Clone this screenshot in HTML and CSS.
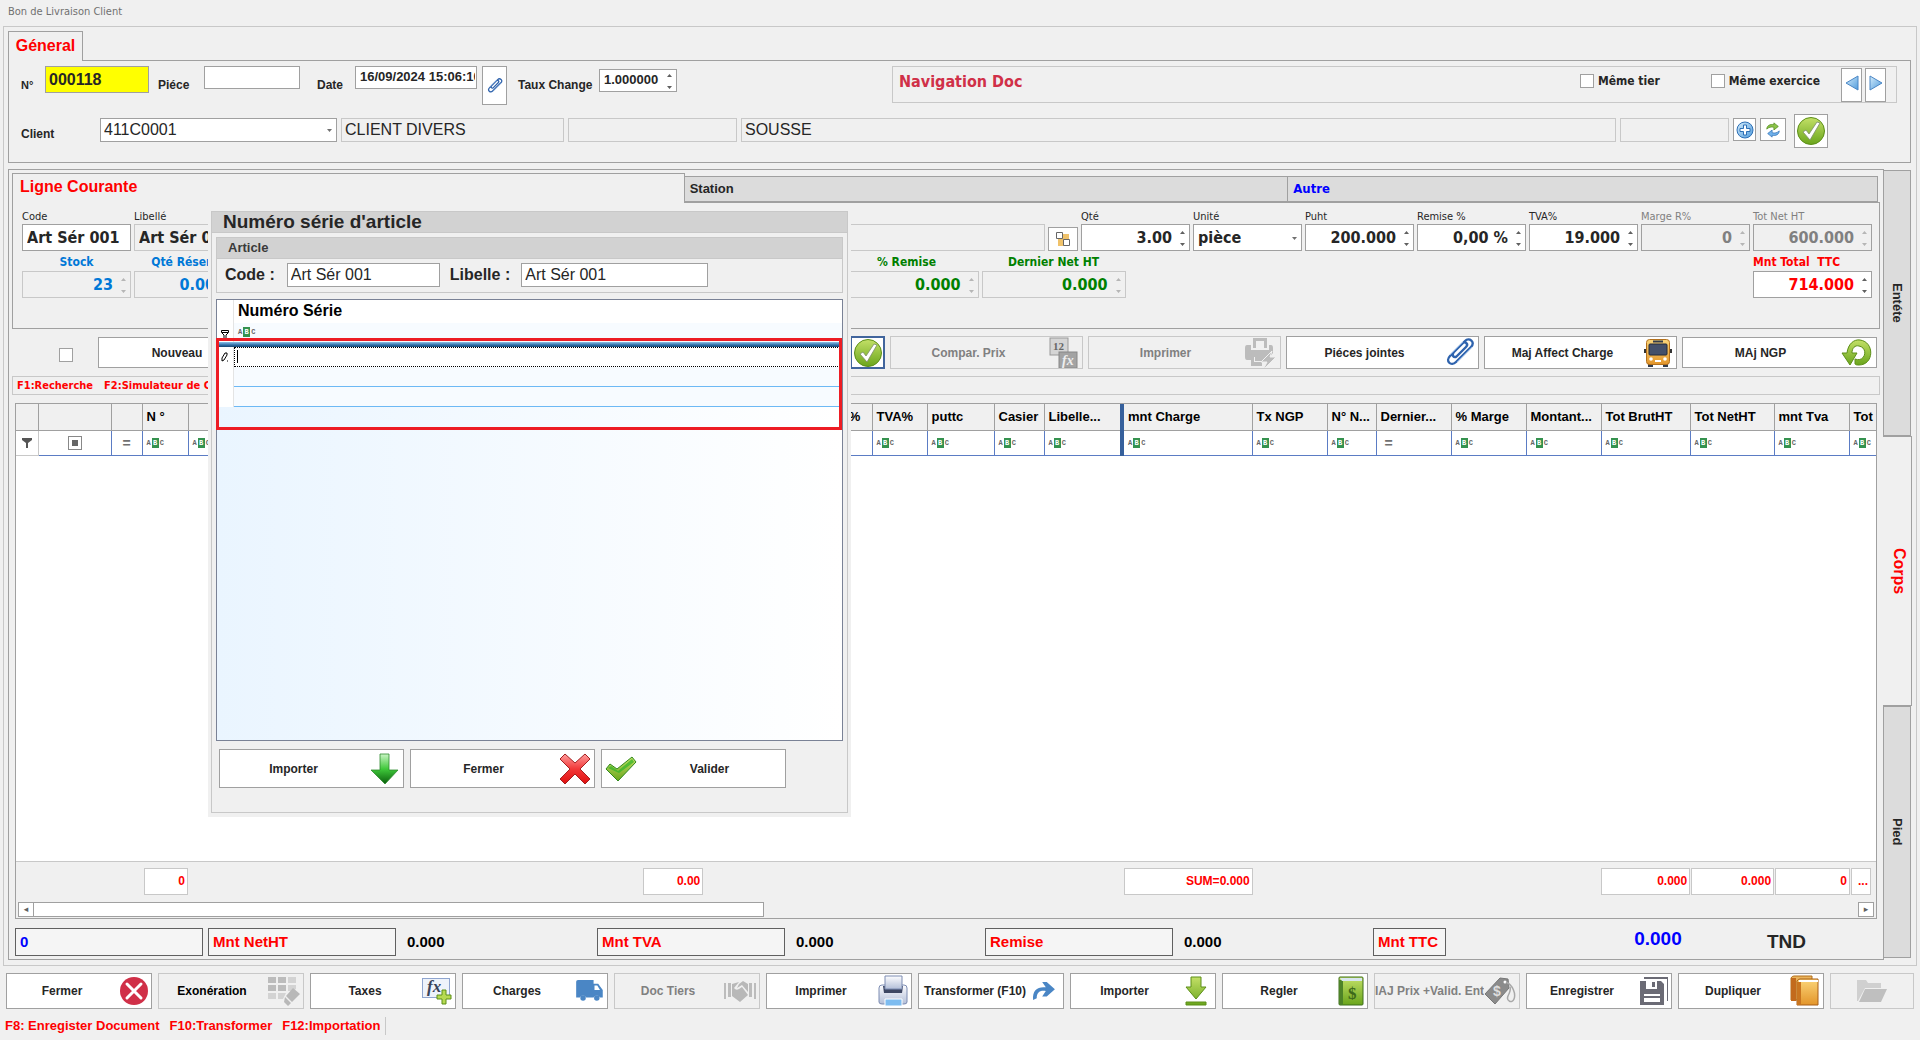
FILE: index.html
```html
<!DOCTYPE html>
<html lang="fr">
<head>
<meta charset="utf-8">
<title>Bon de Livraison Client</title>
<link rel="stylesheet" href="styles.css">
</head>
<body>
<svg class="defs" aria-hidden="true">
  <defs>
    <linearGradient id="gGreen" x1="0" y1="0" x2="0" y2="1"><stop offset="0" stop-color="#c3e067"/><stop offset="1" stop-color="#6aa51c"/></linearGradient>
    <linearGradient id="gBlue" x1="0" y1="0" x2="1" y2="1"><stop offset="0" stop-color="#d4ecfb"/><stop offset="1" stop-color="#4f9bdc"/></linearGradient>
    <linearGradient id="gArrow" x1="0" y1="0" x2="0" y2="1"><stop offset="0" stop-color="#c9f5c4"/><stop offset=".5" stop-color="#3fc83a"/><stop offset="1" stop-color="#0a5f0c"/></linearGradient>
    <linearGradient id="gRed" x1="0" y1="0" x2="0" y2="1"><stop offset="0" stop-color="#ff9d9d"/><stop offset=".5" stop-color="#f23838"/><stop offset="1" stop-color="#e01010"/></linearGradient>
    <linearGradient id="gOrange" x1="0" y1="0" x2="0" y2="1"><stop offset="0" stop-color="#fbd579"/><stop offset="1" stop-color="#e3952a"/></linearGradient>
    <linearGradient id="gSteel" x1="0" y1="0" x2="0" y2="1"><stop offset="0" stop-color="#fdfdff"/><stop offset="1" stop-color="#b3bfd8"/></linearGradient>
  </defs>
  <symbol id="clip" viewBox="0 0 30 30"><path d="M11 19 21 9c3-3-1-6-3-4L5 18c-5 5 1 11 6 6L26 9c5-5-2-10-6-6L9 14c-3 3 0 7 3 4l8-8" fill="none" stroke="#2f63ad" stroke-width="2.4" stroke-linecap="round"/><path d="M5 17 18 4M12 24 27 9" stroke="#8fb8e8" stroke-width=".8"/></symbol>
  <symbol id="prev" viewBox="0 0 14 16"><path d="M13 1v14L1 8z" fill="url(#gBlue)" stroke="#4a86c5"/></symbol>
  <symbol id="next" viewBox="0 0 14 16"><path d="M1 1v14l12-7z" fill="url(#gBlue)" stroke="#4a86c5"/></symbol>
  <symbol id="plus" viewBox="0 0 18 18"><circle cx="9" cy="9" r="8" fill="url(#gBlue)" stroke="#2d6fb5"/><path d="M7.5 4h3v3.500h3.500v3h-3.500v3.500h-3v-3.500H4v-3h3.500z" fill="#fff" stroke="#2d6fb5"/></symbol>
  <symbol id="sync" viewBox="0 0 18 18"><path d="M2 8c0-4 4-6 8-5V1l5 4-5 4V6C7 5 4 6 2 8z" fill="#8cc34a" stroke="#4d8a14" stroke-width=".8"/><path d="M16 10c0 4-4 6-8 5v2l-5-4 5-4v3c3 1 6 0 8-2z" fill="#6fb0ea" stroke="#2d6fb5" stroke-width=".8"/></symbol>
  <symbol id="ok" viewBox="0 0 30 30"><circle cx="15" cy="15" r="13.500" fill="url(#gGreen)" stroke="#5c8f18"/><path d="M7 16l3-2 3 4 8-12 3 1-10 17z" fill="#fff" stroke="#7b8d6a" stroke-width=".8"/></symbol>
  <symbol id="tiles" viewBox="0 0 16 16"><path d="M3 7h6v8H3zM7 3h7v6H7z" fill="#f0c26a"/><path d="M1.500 1.500h6v6h-6zM8.500 8.500h6v6h-6z" fill="#fff" stroke="#666"/></symbol>
  <symbol id="printfast" viewBox="0 0 32 32"><path d="M8 1h14v10h-3V4h-8v7H8z" fill="#bcbcbc"/><path d="M2 8h4v5h18V8h2q2 0 2 3v5l-7 8H10v-4H9v8H6v-5H2q-2 0-2-3v-9q0-3 2-3zM9 25h8v4H6v-2h3z" fill="#bcbcbc"/><path d="M27 14 16 25h6l-4 8 13-13h-6z" fill="#bcbcbc" stroke="#f0f0f0"/></symbol>
  <symbol id="bus" viewBox="0 0 30 30"><path d="M5 26h5v3H5zM20 26h5v3h-5z" fill="#333c4a"/><path d="M1 11h3v4H1zM26 11h3v4h-3z" fill="#333"/><rect x="3.500" y="1.500" width="23" height="25" rx="3" fill="url(#gOrange)" stroke="#b3701c"/><rect x="10" y="2.500" width="10" height="2" fill="#333c4a"/><rect x="6" y="6" width="18" height="11" rx="1" fill="#44506a" stroke="#222b3c"/><circle cx="8" cy="21" r="1.800" fill="#fff"/><circle cx="22" cy="21" r="1.800" fill="#fff"/><rect x="12" y="22" width="6" height="2" fill="#fff"/></symbol>
  <symbol id="reload" viewBox="0 0 32 30"><path d="M1 15h5C7 6 13 1 19 2c15 2 14 25-1 25-2 0-3 0-4-1v-5c10 4 14-11 4-13-4-1-7 2-7 7h5L9 27z" fill="url(#gGreen)" stroke="#5c8f18"/></symbol>
  <symbol id="down" viewBox="0 0 30 32"><path d="M10 1h9v16h9L15 31 1 17h9z" fill="url(#gArrow)" stroke="#2f8a2f" stroke-width=".8"/></symbol>
  <symbol id="cross" viewBox="0 0 32 32"><path d="M6 1 16 10 26 1l5 5-10 10 10 10-5 5-10-10L6 31l-5-5 10-10L1 6z" fill="url(#gRed)" stroke="#a32020" stroke-linejoin="round"/></symbol>
  <symbol id="tick" viewBox="0 0 32 26"><path d="M1 13 5 8l7 5L27 1l4 5L13 25z" fill="url(#gGreen)" stroke="#2f8a1c" stroke-linejoin="round"/><path d="M3 12l3-2 7 5L27 3l2 3-15 11z" fill="#35b52a" opacity=".75"/></symbol>
  <symbol id="close" viewBox="0 0 28 28"><circle cx="14" cy="14" r="14" fill="#d03048"/><path d="M7 7l14 14M21 7 7 21" stroke="#fff" stroke-width="3" stroke-linecap="round"/></symbol>
  <symbol id="griderase" viewBox="0 0 32 30"><path d="M0 1h8v6H0zM10 1h8v6h-8zM0 9h8v6H0zM10 9h8v6h-8z" fill="#bcbcbc"/><path d="M20 1h8v6h-8zM20 9h8v4l-4 2h-4zM0 17h8v6H0zM10 17h8l-3 6h-5z" fill="#d3d3d3"/><path d="M25 12l7 6-8 8-6-6zM17 21l6 6-3 3-4-4z" fill="#b8b8b8"/></symbol>
  <symbol id="truck" viewBox="0 0 30 24"><path d="M1 2q0-2 2-2h17v4h5l5 7v8h-3a4 4 0 0 0-7 0H12a4 4 0 0 0-7 0H1zM21 6v5h6l-3-5z" fill="#4a86c5" fill-rule="evenodd"/><circle cx="8.500" cy="19.500" r="3" fill="#4a86c5"/><circle cx="23.500" cy="19.500" r="3" fill="#4a86c5"/></symbol>
  <symbol id="hands" viewBox="0 0 32 24"><path d="M0 4h2v16H0zM4 4h3v14H4zM25 4h3v14h-3zM30 4h2v16h-2z" fill="#bcbcbc"/><path d="M8 5l7-2-5 6q2 3 5 1l3-2 6 8-8 7-8-6zM15 5l4-3 5 3v8l-6-7-5 3z" fill="#b8b8b8"/></symbol>
  <symbol id="printer" viewBox="0 0 30 32"><path d="M1 13q0-3 3-3h22q3 0 3 3v14q0 2-3 2H4q-3 0-3-2z" fill="url(#gSteel)" stroke="#7c8cb2"/><path d="M5 11h20l-1 7H6z" fill="#3d4763"/><path d="M7 1h17v13H7z" fill="url(#gSteel)" stroke="#7c8cb2"/><path d="M7 24h17v7H7z" fill="#7dbcf0" stroke="#fff"/></symbol>
  <symbol id="redo" viewBox="0 0 24 22"><path d="M0 21C-1 10 5 6 14 7L10 1h5l9 8-9 8h-5l4-6c-7-1-10 2-10 8z" fill="#4a86c5"/></symbol>
  <symbol id="import" viewBox="0 0 22 30"><path d="M6 1h10v10h5L11 23 1 11h5zM1 26h20v3H1z" fill="url(#gGreen)" stroke="#5c8f18"/></symbol>
  <symbol id="floppy" viewBox="0 0 28 30"><path d="M4 1h24v24h-1V3H4z" fill="#6b6b75"/><path d="M0 5h21l3 3v21H0zM6 5v8h11V5zM4 18v8h16v-8z" fill="#6b6b75" fill-rule="evenodd"/><path d="M12 6h3v5h-3zM4 20h16v2H4z" fill="#6b6b75"/></symbol>
  <symbol id="books" viewBox="0 0 30 32"><path d="M1 3q1-2 3-2h18v24H1z" fill="#e9b35b" stroke="#b3701c"/><path d="M1 3h5v23H1z" fill="#c26a1c"/><path d="M7 6q1-2 3-2h18v26H7z" fill="url(#gOrange)" stroke="#a85f18"/><path d="M7 7h4v23H7z" fill="#c9751f"/><path d="M9 5h19v2H9z" fill="#fff"/></symbol>
  <symbol id="folder" viewBox="0 0 30 24"><path d="M0 1h9l2 3h13v5H8L1 22H0z" fill="#d0d0d0"/><path d="M8 10h22l-6 13H2z" fill="#bfbfbf"/></symbol>
  <symbol id="funnel" viewBox="0 0 10 10"><path d="M0 0h10v2L6 5v5H4V5L0 2z" fill="#555"/></symbol>
  <symbol id="funnelx" viewBox="0 0 8 9"><path d="M.5.5h7v2L5 5v3.500H3V5L.5 2.500zM1 2.500h6" fill="#fff" stroke="#000"/></symbol>
  <symbol id="pencil" viewBox="0 0 8 10"><path d="M1 9V6l3-5h2v2L3 8zM6 9h1" fill="none" stroke="#000"/></symbol>
</svg>

<div class="app">
  <div class="caption">Bon de Livraison Client</div>
  <main class="frame">
    <div class="gen-tabs"><button class="gen-tab">Géneral</button></div>
    <section class="general">
      <div class="row-one">
        <label class="tag tiny" for="num">N°</label>
        <input id="num" class="box num" value="000118">
        <label class="tag in9" for="piece">Piéce</label>
        <input id="piece" class="box small" value="">
        <label class="tag in17" for="date">Date</label>
        <input id="date" class="box small" value="16/09/2024 15:06:10">
        <button class="btn clipbtn" aria-label="Joindre"><svg width="16" height="18"><use href="#clip"/></svg></button>
        <label class="tag in11" for="taux">Taux Change</label>
        <span class="spin low"><input id="taux" class="box small" value="1.000000"></span>
        <div class="nav">
          <span class="nav-title">Navigation Doc</span>
          <label class="check"><input type="checkbox">Même tier</label>
          <label class="check second"><input type="checkbox">Même exercice</label>
          <button class="btn navbtn" aria-label="Précédent"><svg width="14" height="16"><use href="#prev"/></svg></button>
          <button class="btn navbtn" aria-label="Suivant"><svg width="14" height="16"><use href="#next"/></svg></button>
        </div>
      </div>
      <div class="row-two">
        <label class="tag client" for="client">Client</label>
        <span class="combo"><input id="client" class="box light" value="411C0001"></span>
        <input class="box light off" aria-label="Nom" value="CLIENT DIVERS" readonly>
        <input class="box light off" aria-label="Matricule" readonly>
        <input class="box light off" aria-label="Adresse" value="SOUSSE" readonly>
        <input class="box light off" aria-label="Téléphone" readonly>
        <button class="btn mini" aria-label="Ajouter"><svg width="18" height="18"><use href="#plus"/></svg></button>
        <button class="btn mini" aria-label="Actualiser"><svg width="16" height="16"><use href="#sync"/></svg></button>
        <button class="btn okbtn" aria-label="Valider client"><svg width="30" height="30"><use href="#ok"/></svg></button>
      </div>
    </section>

    <div class="pages">
      <section class="corps">
        <div class="line-tabs">
          <button class="line-tab current">Ligne Courante</button>
          <button class="line-tab">Station</button>
          <button class="line-tab autre">Autre</button>
        </div>
        <div class="line">
          <div class="line-row">
            <label class="fld w109">Code<input class="box fig left" value="Art Sér 001"></label>
            <label class="fld grow">Libellé<input class="box fig left off" value="Art Sér 001" readonly></label>
            <button class="btn tilebtn" aria-label="Variantes"><svg width="16" height="16"><use href="#tiles"/></svg></button>
            <label class="fld w109">Qté<span class="spin"><input class="box fig" value="3.00"></span></label>
            <label class="fld w109">Unité<span class="combo"><input class="box fig left" value="pièce"></span></label>
            <label class="fld w109">Puht<span class="spin"><input class="box fig" value="200.000"></span></label>
            <label class="fld w109">Remise %<span class="spin"><input class="box fig" value="0,00 %"></span></label>
            <label class="fld w109">TVA%<span class="spin"><input class="box fig" value="19.000"></span></label>
            <label class="fld w109 dim">Marge R%<span class="spin faint"><input class="box fig" value="0" disabled></span></label>
            <label class="fld w119 dim">Tot Net HT<span class="spin faint"><input class="box fig" value="600.000" disabled></span></label>
          </div>
          <div class="line-row sub">
            <label class="stat w109 blue">Stock<span class="spin faint"><input class="box fig off" value="23" readonly></span></label>
            <label class="stat w109 blue">Qté Réservé<span class="spin faint"><input class="box fig off" value="0.000" readonly></span></label>
            <span class="gap-a"></span>
            <label class="stat w144 green">% Remise<span class="spin faint"><input class="box fig off" value="0.000" readonly></span></label>
            <label class="stat w144 green">Dernier Net HT<span class="spin faint"><input class="box fig off" value="0.000" readonly></span></label>
            <span class="gap-b"></span>
            <label class="stat w119 red">Mnt Total&nbsp; TTC<span class="spin"><input class="box fig" value="714.000"></span></label>
          </div>
        </div>

        <div class="actions">
          <input type="checkbox" class="pick" aria-label="Sélection">
          <button class="btn act nouveau"><span>Nouveau</span></button>
          <button class="btn act okline" aria-label="Valider ligne"><svg width="30" height="30"><use href="#ok"/></svg></button>
          <button class="btn act" disabled><span>Compar. Prix</span><svg width="30" height="32" viewBox="0 0 30 32"><rect x="1" y="1" width="18" height="17" fill="#d5d5d5" stroke="#999"/><text x="4" y="13" font-family="Liberation Serif" font-weight="bold" font-size="11" fill="#666">12</text><rect x="10" y="15" width="18" height="16" fill="#a3a3a3" stroke="#888"/><text x="13" y="28" font-family="Liberation Serif" font-style="italic" font-weight="bold" font-size="14" fill="#eee">fx</text></svg></button>
          <button class="btn act" disabled><span>Imprimer</span><svg width="32" height="32"><use href="#printfast"/></svg></button>
          <button class="btn act"><span>Piéces jointes</span><svg width="30" height="30"><use href="#clip"/></svg></button>
          <button class="btn act"><span>Maj Affect Charge</span><svg width="30" height="30"><use href="#bus"/></svg></button>
          <button class="btn act last"><span>MAj NGP</span><svg width="32" height="30"><use href="#reload"/></svg></button>
        </div>
        <div class="keys"><span>F1:Recherche</span><span>F2:Simulateur de Calcul</span></div>

        <div class="grid">
          <table class="lines">
            <colgroup><col style="width:22px"><col style="width:73px"><col style="width:31px"><col style="width:46px"><col style="width:610px"><col style="width:74px"><col style="width:55px"><col style="width:67px"><col style="width:50px"><col style="width:78px"><col style="width:130px"><col style="width:75px"><col style="width:49px"><col style="width:75px"><col style="width:75px"><col style="width:75px"><col style="width:89px"><col style="width:84px"><col style="width:75px"><col style="width:27px"></colgroup>
            <thead><tr><th></th><th></th><th></th><th>N °</th><th></th><th>Remise%</th><th>TVA%</th><th>puttc</th><th>Casier</th><th class="split">Libelle...</th><th>mnt Charge</th><th>Tx NGP</th><th>N° N...</th><th>Dernier...</th><th>% Marge</th><th>Montant...</th><th>Tot BrutHT</th><th>Tot NetHT</th><th>mnt Tva</th><th>Tot</th></tr></thead>
            <tbody><tr><td class="plain"><svg width="10" height="10"><use href="#funnel"/></svg></td><td class="mid"><i class="tri"></i></td><td class="mid">=</td><td><span class="abc">A<b>B</b>C</span></td><td><span class="abc">A<b>B</b>C</span></td><td></td><td><span class="abc">A<b>B</b>C</span></td><td><span class="abc">A<b>B</b>C</span></td><td><span class="abc">A<b>B</b>C</span></td><td class="split"><span class="abc">A<b>B</b>C</span></td><td><span class="abc">A<b>B</b>C</span></td><td><span class="abc">A<b>B</b>C</span></td><td><span class="abc">A<b>B</b>C</span></td><td class="eq">=</td><td><span class="abc">A<b>B</b>C</span></td><td><span class="abc">A<b>B</b>C</span></td><td><span class="abc">A<b>B</b>C</span></td><td><span class="abc">A<b>B</b>C</span></td><td><span class="abc">A<b>B</b>C</span></td><td><span class="abc">A<b>B</b>C</span></td></tr></tbody>
          </table>
          <div class="empty"></div>
          <div class="sums"><i></i><span>0</span><i></i><span>0.00</span><i></i><span>SUM=0.000</span><i></i><span>0.000</span><i></i><span>0.000</span><i></i><span>0</span><i></i><span>...</span></div>
          <div class="scroll"><button class="sb" aria-label="Gauche">◂</button><div class="track"><div class="thumb"></div></div><button class="sb" aria-label="Droite">▸</button></div>
        </div>

        <div class="totals">
          <span class="cap navy">0</span>
          <span class="cap">Mnt NetHT</span><span class="amt">0.000</span>
          <span class="cap">Mnt TVA</span><span class="amt">0.000</span>
          <span class="cap">Remise</span><span class="amt">0.000</span>
          <span class="cap">Mnt TTC</span>
          <div class="grand"><span class="big">0.000</span><span class="cur">TND</span></div>
        </div>
      </section>
      <nav class="side">
        <button>Entéte</button>
        <button class="on">Corps</button>
        <button>Pied</button>
      </nav>
    </div>
  </main>

  <div class="toolbar">
    <button class="btn act"><span>Fermer</span><svg width="28" height="28"><use href="#close"/></svg></button>
    <button class="btn act soft"><span>Exonération</span><svg width="32" height="30"><use href="#griderase"/></svg></button>
    <button class="btn act"><span>Taxes</span><svg width="30" height="28" viewBox="0 0 30 28"><rect x=".5" y="1.500" width="27" height="19" fill="#eef3fb" stroke="#8fa5cf"/><text x="5" y="15" font-family="Liberation Serif" font-style="italic" font-weight="bold" font-size="17" fill="#39435a">fx</text><path d="M20 13h4v5h5v4h-5v5h-4v-5h-5v-4h5z" fill="#b6da52" stroke="#5c8f18"/></svg></button>
    <button class="btn act"><span>Charges</span><svg width="30" height="22"><use href="#truck"/></svg></button>
    <button class="btn act" disabled><span>Doc Tiers</span><svg width="32" height="24"><use href="#hands"/></svg></button>
    <button class="btn act"><span>Imprimer</span><svg width="30" height="32"><use href="#printer"/></svg></button>
    <button class="btn act"><span>Transformer (F10)</span><svg class="inset" width="24" height="20"><use href="#redo"/></svg></button>
    <button class="btn act"><span>Importer</span><svg class="wide" width="22" height="30"><use href="#import"/></svg></button>
    <button class="btn act"><span>Regler</span><svg width="26" height="30" viewBox="0 0 26 30"><rect x="1" y="1" width="24" height="28" rx="1" fill="url(#gGreen)" stroke="#3f6e1c"/><path d="M1 4h4v25H1z" fill="#4e8328"/><path d="M2 2h22v3H4z" fill="#d9e6ef"/><text x="10" y="23" font-family="Liberation Serif" font-weight="bold" font-size="17" fill="#3d691a">$</text></svg></button>
    <button class="btn act tight" disabled><span>IAJ Prix +Valid. Ent</span><svg width="32" height="30" viewBox="0 0 32 30"><path d="M1 18 16 2l8 1 1 9-14 16z" fill="#8b8b8b" stroke="#777"/><circle cx="21" cy="6" r="1.500" fill="#fff"/><path d="M22 6c7 3 10 12 8 17s-8 2-6-3 3-5 2-9" fill="none" stroke="#a8a8a8" stroke-width="1.500"/><text x="9" y="20" font-family="Liberation Sans" font-weight="bold" font-size="14" fill="#ddd">$</text></svg></button>
    <button class="btn act"><span>Enregistrer</span><svg width="28" height="30"><use href="#floppy"/></svg></button>
    <button class="btn act"><span>Dupliquer</span><svg width="30" height="32"><use href="#books"/></svg></button>
    <button class="btn act only" disabled aria-label="Ouvrir"><svg width="30" height="24"><use href="#folder"/></svg></button>
  </div>
  <footer class="status"><span>F8: Enregister Document</span><span>F10:Transformer</span><span>F12:Importation</span></footer>

  <div class="modal" role="dialog" aria-label="Numéro série d'article">
    <div class="modal-in">
      <h2>Numéro série d'article</h2>
      <section class="article">
        <h3>Article</h3>
        <div class="art-row">
          <label for="mcode">Code :</label><input id="mcode" class="box light mcode" value="Art Sér 001">
          <label for="mlib">Libelle :</label><input id="mlib" class="box light mlib" value="Art Sér 001">
        </div>
      </section>
      <div class="serial">
        <div class="s-row head"><span class="ind"></span><b>Numéro Série</b></div>
        <div class="s-row filt"><span class="ind"><svg width="8" height="9"><use href="#funnelx"/></svg></span><span class="cell"><span class="abc">A<b>B</b>C</span></span></div>
        <div class="bar"></div>
        <div class="s-row"><span class="ind"><svg width="8" height="10"><use href="#pencil"/></svg></span><input class="edit" aria-label="Numéro Série" value=""></div>
        <div class="s-row"><span class="ind"></span><span class="cell"></span></div>
        <div class="s-row"><span class="ind"></span><span class="cell"></span></div>
        <div class="mark"></div>
      </div>
      <div class="modal-btns">
        <button class="btn act"><span>Importer</span><svg width="30" height="32"><use href="#down"/></svg></button>
        <button class="btn act"><span>Fermer</span><svg width="32" height="34"><use href="#cross"/></svg></button>
        <button class="btn act"><svg width="32" height="26"><use href="#tick"/></svg><span>Valider</span></button>
      </div>
    </div>
  </div>
</div>
</body>
</html>
```

FILE: styles.css
```css
* { box-sizing: border-box; }
:root {
  --bg: #f0f0f0;
  --line: #a0a0a0;
  --soft: #c8c8c8;
  --ink: #262626;
  --tahoma: "DejaVu Sans Condensed", "DejaVu Sans", sans-serif;
  --arial: "Liberation Sans", Arial, sans-serif;
}
body { margin: 0; background: var(--bg); color: var(--ink); font: bold 12px/16px var(--arial); }
button, input { font: inherit; color: inherit; }
button { cursor: default; }
svg { display: block; flex: none; }
.defs { position: absolute; width: 0; height: 0; }
.app { position: relative; display: flex; flex-direction: column; min-height: 100vh; }
.caption { height: 26px; padding: 4px 8px; font: 11px/16px var(--tahoma); color: #707070; }
.frame { flex: 1; display: flex; flex-direction: column; margin: 0 3px; padding: 4px; border: 1px solid var(--soft); }

.box { width: 100%; height: 24px; margin: 0; padding: 0 3px; border: 1px solid var(--line); border-radius: 0; background: #fff; }
.box.small { height: 23px; padding: 0 1px 2px 4px; font-size: 13px; }
.box.light { font: 16px/20px var(--arial); }
.box.off { background: var(--bg); border-color: var(--soft); }
.btn { display: flex; align-items: center; justify-content: center; margin: 0; padding: 0; border: 1px solid var(--line); border-radius: 0; background: #fff; }
.btn:disabled, .btn.soft { background: var(--bg); border-color: var(--soft); color: #808080; }
.btn.soft { color: #000; }
input[type="checkbox"] { appearance: none; width: 14px; height: 14px; margin: 0; border: 1px solid var(--line); background: #fff; }

.spin, .combo { position: relative; display: block; }
.spin::after, .combo::after { content: ""; position: absolute; right: 5px; top: 50%; width: 5px; height: 15px; margin-top: -7px; background: url('data:image/svg+xml,<svg xmlns="http://www.w3.org/2000/svg" width="5" height="15"><path d="M0 3h5L2.500 0zM0 12h5l-2.500 3z" fill="%23606060"/></svg>'); }
.combo::after { height: 3px; margin-top: -1px; background: url('data:image/svg+xml,<svg xmlns="http://www.w3.org/2000/svg" width="5" height="3"><path d="M0 0h5L2.500 3z" fill="%23707070"/></svg>'); }
.spin.faint::after { opacity: .4; }
.spin.low { margin-top: 3px; }

/* General tab */
.gen-tabs { display: flex; height: 29px; }
.gen-tab { width: 75px; margin: 0 0 -1px; padding: 0 0 2px; border: 1px solid var(--line); border-bottom: 0; background: var(--bg); color: #f00; font-size: 16px; z-index: 1; }
.general { height: 103px; margin-right: 1px; padding: 5px 13px 0 12px; border: 1px solid var(--line); }
.row-one { display: grid; grid-template-columns: 24px 104px 55px 96px 55px 122px 5px 25px 92px 78px 215fr 1005fr; align-items: start; height: 49px; }
.clipbtn { grid-column: 8; height: 39px; }
.tag { line-height: 38px; }
.tiny { font-size: 11px; }
.in9 { padding-left: 9px; }
.in17 { padding-left: 17px; }
.in11 { padding-left: 11px; }
.box.num { height: 27px; background: #ff0; font-size: 16px; line-height: 20px; }
.nav { grid-column: 12; display: flex; align-items: start; height: 37px; padding: 1px 9px 0 6px; border: 1px solid var(--soft); }
.nav-title { flex: 1; padding-top: 4px; color: #d03048; font: bold 16px/20px var(--tahoma); }
.check { display: flex; align-items: center; gap: 4px; padding-top: 5px; font: bold 12px/16px var(--tahoma); }
.check.second { margin-left: 51px; margin-right: 21px; }
.navbtn { width: 21px; height: 34px; padding-bottom: 4px; }
.navbtn + .navbtn { margin-left: 3px; margin-right: 1px; }
.row-two { display: grid; grid-template-columns: 75px 237px 223px 169px 1fr 109px 23px 26px 38px; column-gap: 4px; align-items: start; margin-right: 69px; padding-top: 3px; }
.row-two .box { height: 24px; }
.tag.client { line-height: 32px; }
.row-two .okbtn { height: 34px; margin: -4px 0 0 4px; width: 34px; }
.mini { height: 23px; }

/* Body pages */
.pages { flex: 1; display: flex; margin-top: 6px; margin-bottom: 1px; }
.corps { flex: 1; min-width: 0; display: flex; flex-direction: column; padding: 3px; border: 1px solid var(--line); }
.line-tabs { display: grid; grid-template-columns: 673fr 604fr 590fr; height: 29px; margin-right: 2px; }
.line-tab { margin: 3px 0 0; padding: 0 5px; border: 1px solid var(--line); border-left: 0; background: #dcdcdc; text-align: left; font-size: 13px; }
.line-tab.current { margin: 0 0 -1px; padding: 0 7px 3px; border-left: 1px solid var(--line); border-bottom: 0; background: var(--bg); color: #f00; font-size: 16px; z-index: 1; }
.line-tab.autre { color: #00f; font-family: var(--tahoma); }
.line { height: 127px; padding: 7px 7px 0 9px; border: 1px solid var(--line); }
.line-row { display: flex; gap: 3px; align-items: end; }
.line-row.sub { margin-top: 2px; }
.fld, .stat { display: block; font: 11px/14px var(--tahoma); }
.stat { font: bold 12px/18px var(--tahoma); text-align: center; }
.stat.red { text-align: left; }
.w109 { width: 109px; }
.w119 { width: 119px; }
.w144 { width: 144px; }
.grow { flex: 1; }
.fig { display: block; height: 27px; padding: 0 17px 0 4px; font: bold 16px/20px var(--tahoma); text-align: right; }
.fig.left { text-align: left; padding-right: 4px; }
.fig:disabled { background: var(--bg); }
.dim, .dim input { color: #808080; }
.blue { color: #0078d7; }
.green { color: #008000; }
.red { color: #f00; }
.tilebtn { width: 30px; height: 24px; }
.gap-a { flex: 586; }
.gap-b { flex: 622; }

.actions { display: grid; grid-template-columns: 86px 158px 1fr 35px 198px 198px 198px 198px 200px; height: 33px; margin: 7px 3px 0 0; }
.pick { grid-column: 1; margin: 12px 0 0 47px !important; }
.act { min-width: 0; overflow: hidden; padding: 0 3px; }
.act span { flex: 1; min-width: 0; overflow: hidden; white-space: nowrap; text-align: center; }
.act span + svg { margin-left: 6px; }
.act span + svg.inset { margin: 0 4px; }
.act span + svg.wide { margin: 0 5px 0 10px; }
.act.tight { padding-left: 0; }
.act.tight span + svg { margin-left: 0; }
.actions .act { margin-left: 5px; }
.actions .nouveau { margin: 1px 0; }
.actions .last { margin: 1px 0 1px 5px; }
.actions .okline { grid-column: 4; margin: 0; border: 2px solid #41659d; }
.keys { display: flex; gap: 11px; height: 19px; margin-top: 7px; padding: 0 4px; border: 1px solid var(--soft); color: #f00; font: bold 11px/17px var(--tahoma); }

.grid { flex: 1; display: flex; flex-direction: column; margin: 8px 3px 0; border: 1px solid var(--line); background: #fff; overflow: hidden; }
.lines { width: 100%; table-layout: fixed; border-collapse: collapse; }
.lines th { height: 26px; padding: 0 4px; border-right: 1px solid var(--line); border-bottom: 1px solid var(--line); background: var(--bg); color: #000; font-size: 13px; text-align: left; white-space: nowrap; overflow: hidden; }
.lines td { height: 25px; padding: 0 4px; border-right: 1px solid #5b7cc4; border-bottom: 1px solid #5b7cc4; color: #707070; font-size: 14px; line-height: 14px; }
.lines td.eq { padding-left: 8px; }
.lines td.plain { padding: 0 6px; border-color: var(--soft); }
.lines td.mid { text-align: center; padding: 0; }
.lines .split { border-right: 4px solid #36609c; }
.tri { display: inline-block; width: 14px; height: 14px; border: 1px solid #888; background: #666; box-shadow: inset 0 0 0 3px #fff; vertical-align: middle; }
.abc { display: flex; align-items: center; font: bold 7px/10px "Liberation Mono", monospace; color: #666; }
.abc b { width: 7px; margin: 0 1px; background: #35924f; color: #fff; text-align: center; }
.empty { flex: 1; border-bottom: 1px solid var(--soft); }
.sums { display: grid; grid-template-columns: 128fr 44fr 456fr 60fr 421fr 129fr 349fr 89fr 1fr 83fr 1fr 75fr 1fr 20fr 5fr; height: 40px; padding: 6px 0 7px; background: var(--bg); color: #f00; }
.sums span { padding-right: 2px; border: 1px solid var(--soft); background: #fff; font: bold 12px/25px var(--arial); text-align: right; overflow: hidden; }
.scroll { display: flex; height: 16px; padding: 0 2px; background: var(--bg); }
.sb { width: 16px; height: 15px; padding: 0; border: 1px solid var(--line); background: #fff; color: #606060; font: 9px/9px "DejaVu Sans", sans-serif; }
.track { flex: 1; }
.thumb { width: 40%; height: 15px; border: 1px solid var(--line); border-left: 0; background: #fff; }

.totals { display: grid; grid-template-columns: 188fr 188fr 191fr 188fr 190fr 188fr 190fr 73fr 426fr; column-gap: 5px; align-items: center; height: 28px; margin: 9px 3px 0; font-size: 15px; }
.totals .cap { height: 28px; padding: 0 4px; border: 1px solid #606060; background: #f5f5f5; color: #f00; line-height: 26px; white-space: nowrap; }
.totals .navy { color: #00f; }
.amt { padding-left: 6px; color: #000; }
.grand { display: flex; justify-content: space-between; align-items: center; padding: 0 71px 0 43%; font: bold 19px/28px var(--arial); }
.big { padding-bottom: 6px; color: #00f; line-height: 22px; }

.side { display: grid; grid-template-rows: 266fr 269fr 252fr; width: 28px; padding: 1px 0 2px; }
.side button { width: 27px; margin: 0; padding: 0; border: 1px solid var(--line); border-left: 0; background: #dcdcdc; writing-mode: vertical-rl; font-size: 13px; }
.side button.on { width: 29px; margin-left: -1px; padding-left: 4px; background: var(--bg); color: #f00; font-size: 16px; }

.toolbar { display: grid; grid-template-columns: repeat(12, 146fr) 84fr; column-gap: 6px; height: 36px; margin: 7px 6px 0; }
.only { justify-content: center; }
.status { display: flex; gap: 10px; height: 31px; padding: 8px 0 0 5px; color: #f00; font-size: 13px; line-height: 18px; }
.status::after { content: ""; width: 1px; height: 18px; margin-left: -5px; background: var(--soft); }

/* Serial number dialog */
.modal { position: absolute; z-index: 5; left: 208px; top: 206px; width: 643px; padding: 5px 3px 4px; background: var(--bg); }
.modal-in { height: 602px; border: 1px solid var(--soft); }
.modal h2 { margin: 0; padding: 0 11px; border-bottom: 1px solid var(--soft); background: #d2d2d2; font: bold 19px/20px var(--arial); }
.article { margin: 4px 4px 0; border: 1px solid var(--soft); height: 56px; }
.article h3 { margin: 0; padding: 0 11px; border-bottom: 1px solid var(--soft); background: #d2d2d2; font: bold 13px/20px var(--arial); color: #3a3a3a; }
.art-row { display: flex; align-items: center; padding: 4px 8px; font-size: 16px; }
.art-row .mcode { width: 153px; margin: 0 10px 0 12px; }
.art-row .mlib { width: 187px; margin-left: 11px; }
.serial { position: relative; height: 442px; margin: 6px 4px 0; border: 1px solid #7a8296; background: linear-gradient(90deg, #eaf5ff, #fff); }
.s-row { display: flex; height: 20px; }
.ind { display: flex; align-items: center; justify-content: center; width: 17px; background: #fff; border-right: 1px solid #e4e4e4; }
.cell { flex: 1; background: #f7fbff; border-bottom: 1px solid #6db9f5; }
.head { height: 23px; background: #fff; color: #000; font-size: 16px; line-height: 21px; }
.head b { padding-left: 4px; }
.filt { height: 19px; }
.filt .cell { padding: 4px; border: 0; }
.filt .ind { padding-top: 4px; }
.bar { height: 5px; background: linear-gradient(#8ec1ea, #2f6fa8 60%, #17436e); }
.edit { flex: 1; min-width: 0; border: 1px dotted #000; padding: 0 2px; background: linear-gradient(#000, #000) 2px 2px / 1px 13px no-repeat #fff; outline: 0; }
.mark { position: absolute; left: -1px; top: 38px; width: 626px; height: 92px; border: 3px solid #ed1c24; }
.modal-btns { display: flex; gap: 6px; margin: 8px 0 0 7px; }
.modal-btns .act { width: 185px; height: 39px; font-size: 12px; }
```
